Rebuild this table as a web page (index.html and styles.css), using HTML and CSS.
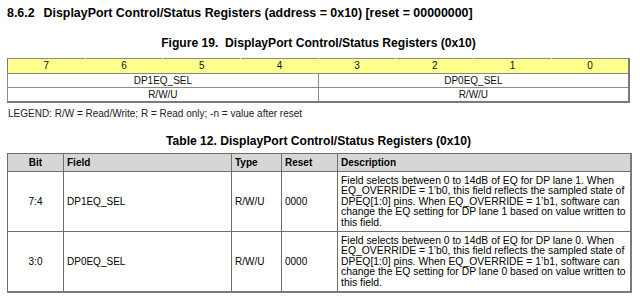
FILE: index.html
```html
<!DOCTYPE html>
<html>
<head>
<meta charset="utf-8">
<link rel="stylesheet" href="styles.css">
</head>
<body>
<div class="page">
  <h2 class="section"><span class="num">8.6.2</span>DisplayPort Control/Status Registers (address = 0x10) [reset = 00000000]</h2>
  <div class="caption fig-caption">Figure 19.&nbsp; DisplayPort Control/Status Registers (0x10)</div>
  <table class="reg">
    <tr class="bits">
      <td>7</td><td>6</td><td>5</td><td>4</td><td>3</td><td>2</td><td>1</td><td>0</td>
    </tr>
    <tr class="fields">
      <td colspan="4">DP1EQ_SEL</td><td colspan="4">DP0EQ_SEL</td>
    </tr>
    <tr class="fields">
      <td colspan="4">R/W/U</td><td colspan="4">R/W/U</td>
    </tr>
  </table>
  <p class="legend">LEGEND: R/W = Read/Write; R = Read only; -n = value after reset</p>
  <div class="caption tbl-caption">Table 12. DisplayPort Control/Status Registers (0x10)</div>
  <table class="desc">
    <colgroup>
      <col class="c-bit"><col class="c-field"><col class="c-type"><col class="c-reset"><col class="c-desc">
    </colgroup>
    <tr class="head">
      <th class="center">Bit</th><th>Field</th><th>Type</th><th>Reset</th><th>Description</th>
    </tr>
    <tr class="row">
      <td class="center">7:4</td>
      <td>DP1EQ_SEL</td>
      <td>R/W/U</td>
      <td>0000</td>
      <td class="text">Field selects between 0 to 14dB of EQ for DP lane 1. When<br>EQ_OVERRIDE = 1’b0, this field reflects the sampled state of<br>DPEQ[1:0] pins. When EQ_OVERRIDE = 1’b1, software can<br>change the EQ setting for DP lane 1 based on value written to<br>this field.</td>
    </tr>
    <tr class="row">
      <td class="center">3:0</td>
      <td>DP0EQ_SEL</td>
      <td>R/W/U</td>
      <td>0000</td>
      <td class="text">Field selects between 0 to 14dB of EQ for DP lane 0. When<br>EQ_OVERRIDE = 1’b0, this field reflects the sampled state of<br>DPEQ[1:0] pins. When EQ_OVERRIDE = 1’b1, software can<br>change the EQ setting for DP lane 0 based on value written to<br>this field.</td>
    </tr>
  </table>
</div>
</body>
</html>
```
FILE: styles.css
```css
html, body {
  margin: 0;
  padding: 0;
  background: #ffffff;
}
body {
  font-family: "Liberation Sans", Arial, sans-serif;
  color: #000;
}
.page {
  padding: 6px 10px 0 7px;
  width: 623px;
}
.section {
  margin: 0;
  font-size: 12.4px;
  line-height: 14px;
  font-weight: bold;
  white-space: nowrap;
}
.section .num {
  margin-right: 9px;
}
.caption {
  font-weight: bold;
  font-size: 12.1px;
  line-height: 14px;
  text-align: center;
  white-space: nowrap;
}
.fig-caption {
  margin-top: 16px;
  margin-bottom: 8px;
}
.reg {
  width: 623px;
  border-collapse: collapse;
  table-layout: fixed;
  border: 1px solid #7a7a7a;
  border-right-width: 2px;
  border-bottom-width: 2px;
}
.reg td {
  border: 1px solid #8a8a8a;
  text-align: center;
  font-size: 10px;
  line-height: 12px;
  padding: 0;
  color: #111;
}
.reg .bits td {
  background: #ffff8c;
  height: 14px;
  border-left-color: #ffff8c;
  border-right-color: #ffff8c;
}
.reg .bits td:first-child {
  border-left-color: #7a7a7a;
}
.reg .bits td:last-child {
  border-right-color: #7a7a7a;
}
.reg .fields td {
  height: 13px;
}
.legend {
  margin: 5px 0 0 1px;
  font-size: 10px;
  line-height: 12px;
  color: #222;
}
.tbl-caption {
  margin-top: 14px;
  margin-bottom: 5px;
}
.desc {
  width: 623px;
  border-collapse: collapse;
  table-layout: fixed;
  border: 1px solid #7a7a7a;
  border-right-width: 2px;
  border-bottom-width: 2px;
}
.c-bit { width: 56px; }
.c-field { width: 168px; }
.c-type { width: 50px; }
.c-reset { width: 56px; }
.c-desc { width: 293px; }
.desc th, .desc td {
  border: 1px solid #6e6e6e;
  padding: 0 3px;
  font-size: 10px;
  text-align: left;
  vertical-align: middle;
}
.desc th {
  background: #d6d6d6;
  font-weight: bold;
  height: 17px;
}
.desc .center {
  text-align: center;
}
.desc .row td {
  height: 58px;
}
.desc td.text {
  font-size: 10.4px;
  line-height: 10.4px;
  white-space: nowrap;
  padding-top: 1px;
}
```
